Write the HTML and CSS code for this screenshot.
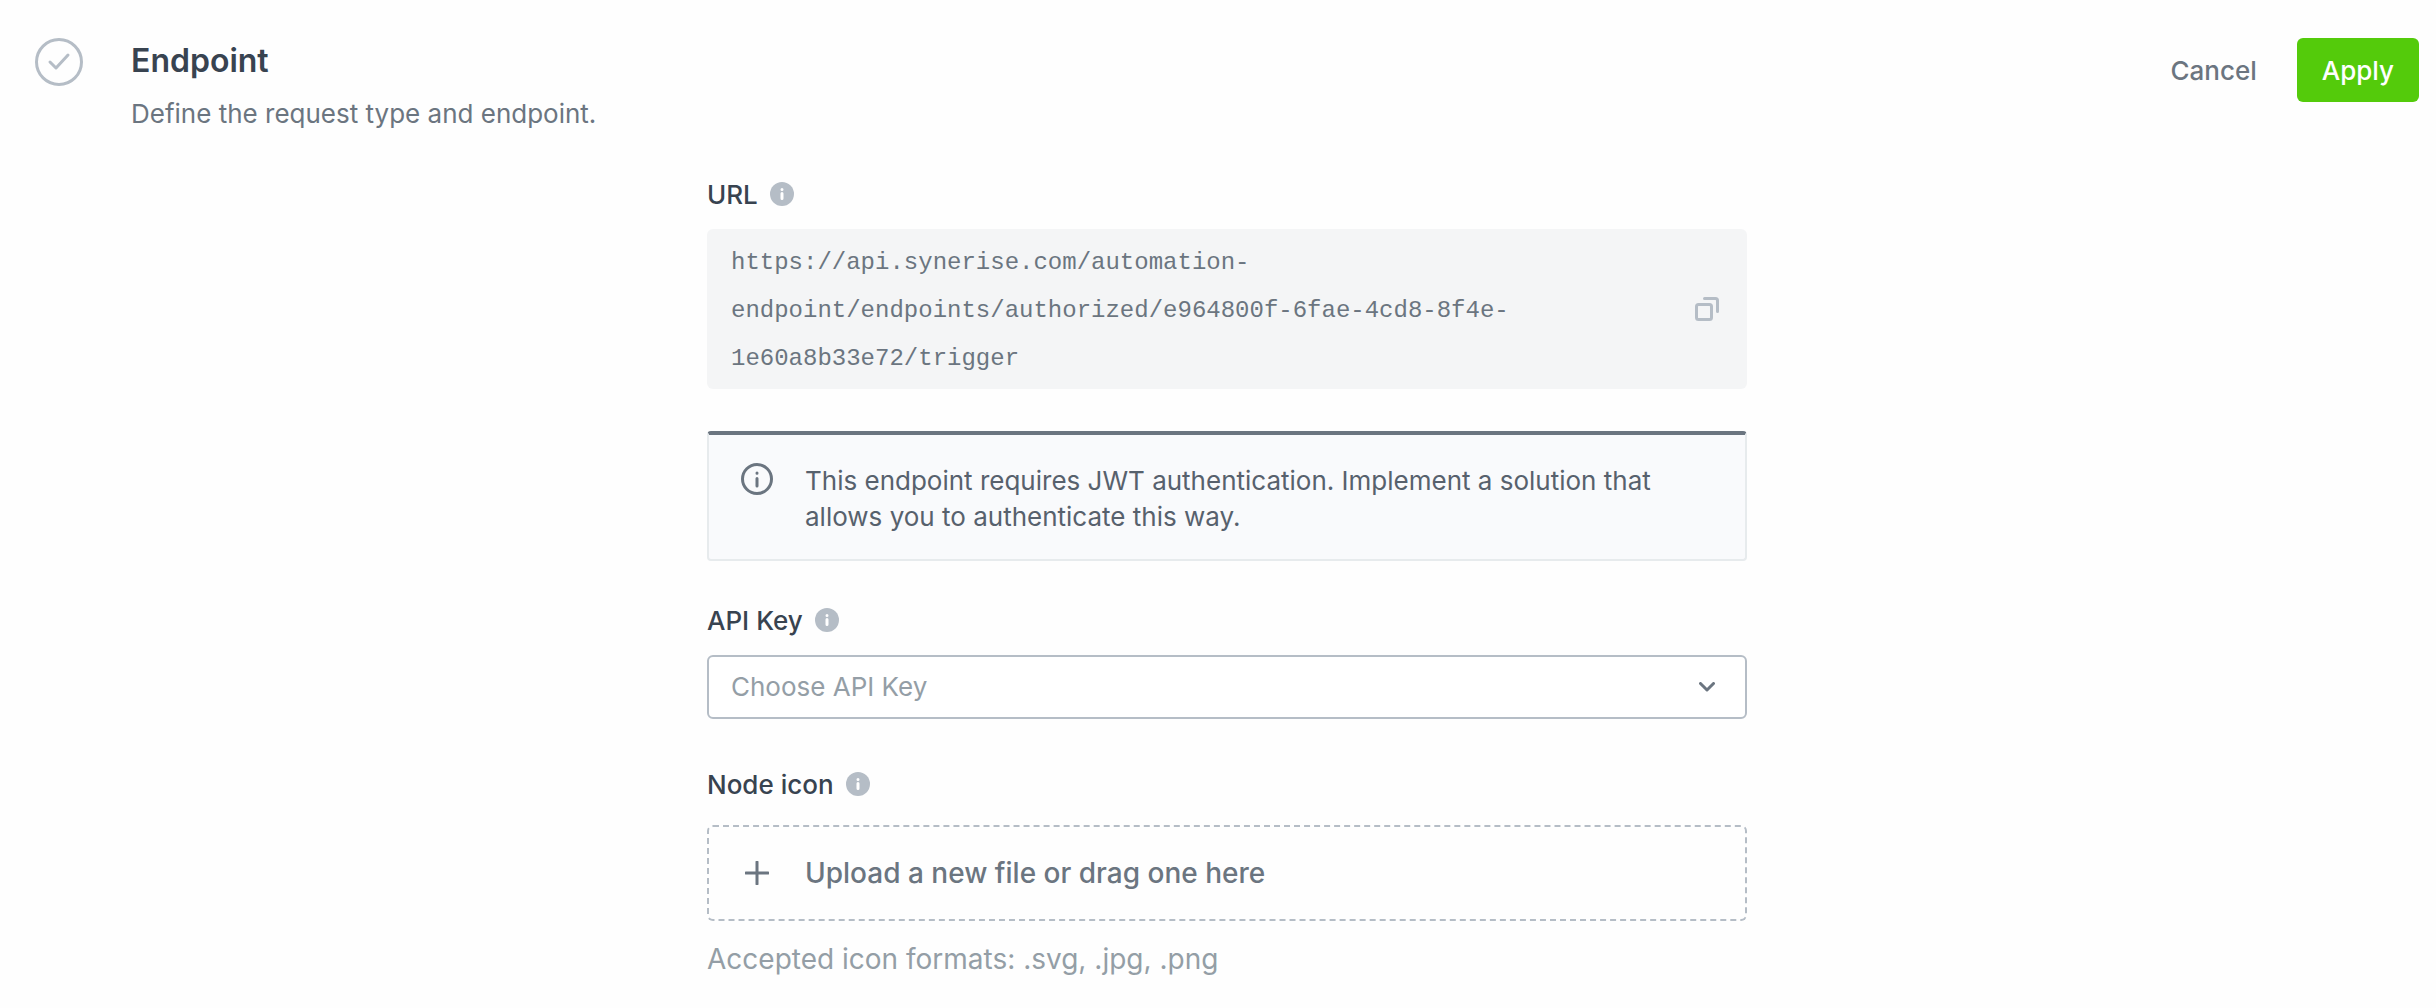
FILE: index.html
```
<!DOCTYPE html>
<html lang="en">
<head>
    <meta charset="UTF-8">
    <meta name="viewport" content="width=device-width, initial-scale=1.0">
    <title>Endpoint</title>
    <link rel="stylesheet" href="styles.css">
</head>
<body>
    <main class="panel">
        <header class="panel-header">
            <svg class="status-icon" viewBox="0 0 48 48" aria-hidden="true">
                <circle cx="24" cy="24" r="22.5"/>
                <path d="M15 24l6 6 12-13"/>
            </svg>
            <div class="panel-heading">
                <h1>Endpoint</h1>
                <p>Define the request type and endpoint.</p>
            </div>
            <div class="panel-actions">
                <button type="button" class="btn btn-cancel">Cancel</button>
                <button type="submit" form="endpoint-form" class="btn btn-apply">Apply</button>
            </div>
        </header>

        <form class="endpoint-form" id="endpoint-form">
            <div class="field-label">
                <label for="endpoint-url">URL</label>
                <button type="button" class="info-button" aria-label="About URL">
                    <svg viewBox="0 0 24 24"><circle cx="12" cy="12" r="12"/><path d="M12 11.5v5M12 7.5v.1"/></svg>
                </button>
            </div>
            <div class="url-box">
                <output id="endpoint-url">https://api.synerise.com/automation-endpoint/endpoints/authorized/e964800f-6fae-4cd8-8f4e-1e60a8b33e72/trigger</output>
                <button type="button" class="copy-button" aria-label="Copy URL">
                    <svg viewBox="0 0 24 24"><rect x="1.5" y="7.5" width="15" height="15" rx="2"/><path d="M9.5 1.5h11a2 2 0 0 1 2 2v11"/></svg>
                </button>
            </div>

            <div class="alert">
                <svg class="alert-icon" viewBox="0 0 32 32" aria-hidden="true">
                    <circle cx="16" cy="16" r="14.5"/>
                    <path d="M16 15.5v7.5M16 10v.2"/>
                </svg>
                <p>This endpoint requires JWT authentication. Implement a solution that allows you to authenticate this way.</p>
            </div>

            <div class="field-label">
                <label for="api-key">API Key</label>
                <button type="button" class="info-button" aria-label="About API Key">
                    <svg viewBox="0 0 24 24"><circle cx="12" cy="12" r="12"/><path d="M12 11.5v5M12 7.5v.1"/></svg>
                </button>
            </div>
            <div class="select-box">
                <select id="api-key">
                    <option value="">Choose API Key</option>
                </select>
                <svg class="chevron" viewBox="0 0 16 10" aria-hidden="true"><path d="M1.5 1.5L8 8l6.5-6.5"/></svg>
            </div>

            <div class="field-label">
                <label for="node-icon">Node icon</label>
                <button type="button" class="info-button" aria-label="About node icon">
                    <svg viewBox="0 0 24 24"><circle cx="12" cy="12" r="12"/><path d="M12 11.5v5M12 7.5v.1"/></svg>
                </button>
            </div>
            <label class="upload-box">
                <input type="file" id="node-icon" accept=".svg,.jpg,.png">
                <svg class="plus" viewBox="0 0 24 24" aria-hidden="true"><path d="M12 1v22M1 12h22"/></svg>
                <span>Upload a new file or drag one here</span>
            </label>
            <p class="hint">Accepted icon formats: .svg, .jpg, .png</p>
        </form>
    </main>
</body>
</html>
```
FILE: styles.css
```
* {
    box-sizing: border-box;
}
body {
    margin: 0;
    background-color: #fefefe;
    color: #384350;
    font-family: Inter, sans-serif;
    font-size: 26px;
    line-height: 36px;
}
h1, p {
    margin: 0;
}
button, select {
    font: inherit;
}
svg {
    display: block;
    fill: none;
    stroke: currentColor;
    stroke-linecap: round;
    stroke-linejoin: round;
}
.panel {
    padding: 38px 17px 24px 35px;
}
.panel-header {
    display: flex;
    align-items: flex-start;
}
.status-icon {
    width: 48px;
    height: 48px;
    margin-right: 48px;
    color: #b5bdc6;
    stroke-width: 3;
}
.panel-heading {
    flex: 1;
}
.panel-heading h1 {
    font-size: 32px;
    font-weight: 600;
    line-height: 46px;
}
.panel-heading p {
    margin-top: 12px;
    color: #6b7580;
}
.panel-actions {
    display: flex;
    gap: 15px;
}
.btn {
    height: 64px;
    padding: 2px 25px 0;
    border: none;
    border-radius: 6px;
    font-weight: 500;
    cursor: pointer;
}
.btn-cancel {
    background: none;
    color: #6b7580;
}
.btn-apply {
    background-color: #54cb0b;
    color: #fff;
}
.endpoint-form {
    max-width: 1040px;
    margin: 45px auto 0;
}
.field-label {
    display: flex;
    align-items: center;
    gap: 12px;
    margin-bottom: 16px;
    font-weight: 500;
}
.info-button, .copy-button {
    flex: none;
    padding: 0;
    border: none;
    background: none;
    color: #b5bdc6;
    cursor: pointer;
}
.info-button {
    padding-bottom: 2px;
}
.info-button svg, .copy-button svg {
    width: 24px;
    height: 24px;
}
.info-button circle {
    fill: currentColor;
    stroke: none;
}
.info-button path {
    stroke: #fff;
    stroke-width: 3;
}
.url-box {
    display: flex;
    align-items: center;
    justify-content: space-between;
    margin-bottom: 42px;
    padding: 8px 28px 8px 24px;
    border-radius: 6px;
    background-color: #f4f5f6;
}
.url-box output {
    max-width: 850px;
    padding-top: 2px;
    margin-bottom: -2px;
    color: #6b7580;
    font-family: "Liberation Mono", monospace;
    font-size: 24px;
    line-height: 48px;
    overflow-wrap: anywhere;
}
.copy-button svg {
    stroke-width: 3;
}
.alert {
    display: flex;
    gap: 32px;
    margin-bottom: 42px;
    padding: 28px 64px 24px 32px;
    border: 2px solid #e7ebed;
    border-top: 4px solid #6b7580;
    border-radius: 4px;
    background-color: #f9fafc;
    color: #57616d;
}
.alert-icon {
    flex: none;
    width: 32px;
    height: 32px;
    color: #6b7580;
    stroke-width: 3;
}
.select-box {
    display: grid;
    align-items: center;
    margin-bottom: 48px;
}
.select-box select, .select-box .chevron {
    grid-area: 1 / 1;
}
.select-box select {
    width: 100%;
    height: 64px;
    padding: 0 22px;
    border: 2px solid #b5bdc6;
    border-radius: 6px;
    background-color: #fff;
    color: #949ea6;
    appearance: none;
}
.select-box .chevron {
    justify-self: end;
    width: 16px;
    height: 10px;
    margin-right: 32px;
    color: #6b7580;
    stroke-width: 3;
    pointer-events: none;
}
.upload-box {
    display: flex;
    align-items: center;
    gap: 36px;
    height: 96px;
    margin-top: 22px;
    padding: 0 36px;
    border: 2px dashed #b5bdc6;
    border-radius: 6px;
    color: #6b7580;
    font-size: 28px;
    font-weight: 500;
    cursor: pointer;
}
.upload-box input {
    position: absolute;
    width: 1px;
    height: 1px;
    opacity: 0;
}
.plus {
    width: 24px;
    height: 24px;
    stroke-width: 3;
}
.hint {
    margin-top: 20px;
    color: #949ea6;
    font-size: 28px;
}
```
